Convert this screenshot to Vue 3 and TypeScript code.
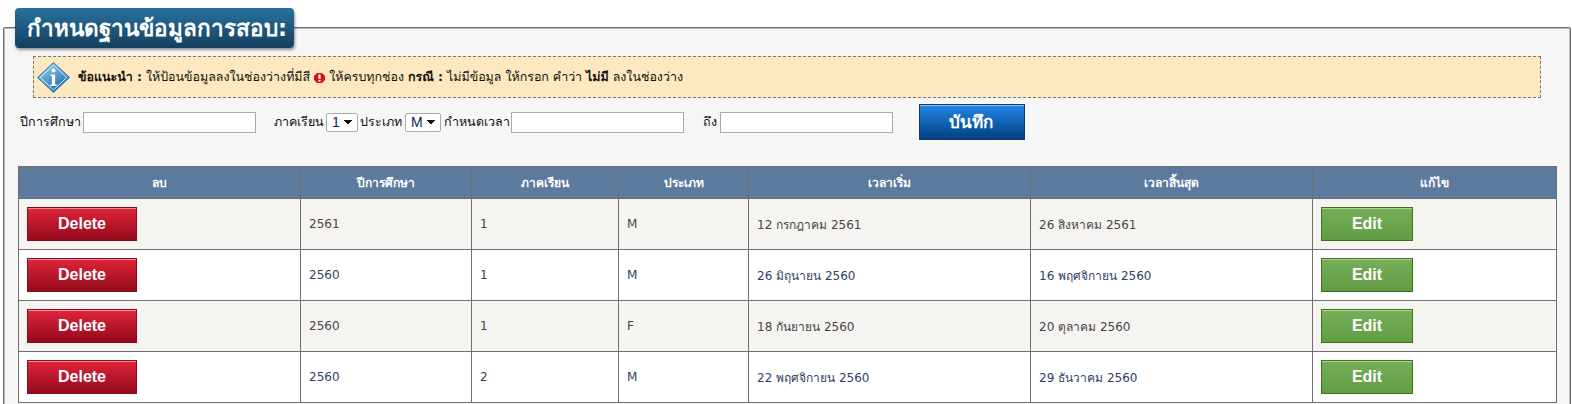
<script setup lang="ts">
interface Row { year: string; term: string; type: string; start: string; end: string }
const rows: Row[] = [
  { year: '2561', term: '1', type: 'M', start: '12 กรกฎาคม 2561', end: '26 สิงหาคม 2561' },
  { year: '2560', term: '1', type: 'M', start: '26 มิถุนายน 2560', end: '16 พฤศจิกายน 2560' },
  { year: '2560', term: '1', type: 'F', start: '18 กันยายน 2560', end: '20 ตุลาคม 2560' },
  { year: '2560', term: '2', type: 'M', start: '22 พฤศจิกายน 2560', end: '29 ธันวาคม 2560' },
]
</script>

<template>
  <div class="page">
    <fieldset class="box">
      <legend class="title">กำหนดฐานข้อมูลการสอบ:</legend>
      <div class="notice">
        <svg class="info" width="33" height="31" viewBox="0 0 33 31">
          <defs>
            <linearGradient id="dia" x1="0" y1="0" x2="0.6" y2="1">
              <stop offset="0" stop-color="#a9d6f3" />
              <stop offset="1" stop-color="#1a6cae" />
            </linearGradient>
          </defs>
          <path d="M16.5 .5 32.5 15.5 16.5 30.5.5 15.5z" fill="url(#dia)" stroke="#2a77b4" />
          <path d="M16.5 3 29.8 15.5 16.5 28 3.2 15.5z" fill="none" stroke="#d9effc" />
          <circle cx="16.5" cy="8.5" r="2" fill="#fff" />
          <path d="M13.5 12.5h4.6v10h1.6V24h-6.4v-1.500h1.600v-8.500h-1.400z" fill="#fff" />
        </svg>
        <span><b>ข้อแนะนำ :</b> ให้ป้อนข้อมูลลงในช่องว่างที่มีสี</span>
        <svg class="excl" width="11" height="10" viewBox="0 0 11 10">
          <path d="M3 0h5l3 3v4l-3 3H3L0 7V3z" fill="#d3121a" />
          <rect x="4.400" y="1.500" width="2.200" height="4.300" fill="#fff" />
          <rect x="4.400" y="6.800" width="2.200" height="1.800" fill="#fff" />
        </svg>
        <span>ให้ครบทุกช่อง <b>กรณี :</b> ไม่มีข้อมูล ให้กรอก คำว่า <b>ไม่มี</b> ลงในช่องว่าง</span>
      </div>

      <form class="filters" @submit.prevent>
        <label for="f-year" class="first">ปีการศึกษา</label>
        <input id="f-year" class="text" type="text" />
        <label for="f-term" class="gap-a">ภาคเรียน</label>
        <select id="f-term" class="sel sel-a"><option>1</option></select>
        <label for="f-type" class="type">ประเภท</label>
        <select id="f-type" class="sel sel-b"><option>M</option></select>
        <label for="f-from" class="from">กำหนดเวลา</label>
        <input id="f-from" class="text" type="text" />
        <label for="f-to" class="gap-b">ถึง</label>
        <input id="f-to" class="text" type="text" />
        <button class="btn save" type="submit">บันทึก</button>
      </form>

      <table class="grid">
        <colgroup>
          <col style="width: 282px" /><col style="width: 171px" /><col style="width: 147px" />
          <col style="width: 130px" /><col style="width: 282px" /><col style="width: 282px" /><col />
        </colgroup>
        <thead>
          <tr>
            <th>ลบ</th><th>ปีการศึกษา</th><th>ภาคเรียน</th><th>ประเภท</th><th>เวลาเริ่ม</th><th>เวลาสิ้นสุด</th><th>แก้ไข</th>
          </tr>
        </thead>
        <tbody>
          <tr v-for="(r, i) in rows" :key="i">
            <td><button class="btn del" type="button">Delete</button></td>
            <td>{{ r.year }}</td>
            <td>{{ r.term }}</td>
            <td>{{ r.type }}</td>
            <td>{{ r.start }}</td>
            <td>{{ r.end }}</td>
            <td><button class="btn edit" type="button">Edit</button></td>
          </tr>
        </tbody>
      </table>
    </fieldset>
  </div>
</template>

<style>
html, body { margin: 0; overflow: hidden; background: #fff; }
</style>

<style scoped>
.page {
  height: 404px;
  overflow: hidden;
  padding: 8px 1px 0 3px;
  box-sizing: border-box;
  font-family: "DejaVu Sans", "Noto Sans", sans-serif;
  font-size: 12px;
}
.box {
  margin: 0;
  border: 1px solid #6f6f6f;
  box-shadow: inset 0 0 0 1px #b8b8b8;
  border-radius: 2px;
  background: #f6f6f6;
  padding: 0 13px 20px 14px;
  min-width: 0;
  height: 600px;
  box-sizing: border-box;
}
.title {
  margin-left: -3px;
  padding: 0 7px 0 12px;
  height: 39px;
  line-height: 40px;
  box-sizing: border-box;
  border-radius: 4px;
  background: linear-gradient(#27739f, #15405f);
  box-shadow: 0 1px 0 #15405f, 1px 3px 3px rgba(0, 0, 0, 0.4);
  color: #fff;
  font-size: 22.5px;
  font-weight: bold;
  white-space: nowrap;
}
.notice {
  display: flex;
  align-items: center;
  gap: 4px;
  margin: 9px 16px 0 15px;
  height: 42px;
  box-sizing: border-box;
  padding: 1px 0 0 3px;
  border: 1px dashed #777;
  background: #fee8bf;
  color: #111;
  font-size: 12.45px;
  text-rendering: geometricPrecision;
}
.info { margin: -1px 4px 0 0; flex: none; }
.excl { flex: none; }
.filters {
  display: flex;
  align-items: center;
  height: 36px;
  margin-top: 6px;
  margin-bottom: 26px;
  color: #111;
  font-size: 12.5px;
}
.filters label { margin-right: 3px; margin-left: 3px; white-space: nowrap; }
.filters .first { margin-left: 2px; margin-right: 2px; }
.filters .gap-a { margin-left: 18px; margin-right: 2px; }
.filters .type { margin-left: 2px; }
.filters .from { margin-right: 1px; }
.filters .gap-b { margin-left: 19px; }
.text {
  width: 173px;
  height: 21px;
  box-sizing: border-box;
  border: 1px solid #aaa;
  background: #fff;
  padding: 0 2px;
}
.sel {
  appearance: none;
  height: 19px;
  box-sizing: border-box;
  padding: 0 0 0 5px;
  border: 1px solid #aaa;
  border-radius: 2px;
  background-color: #fff;
  background-image:
    linear-gradient(45deg, transparent 50%, #111 50%),
    linear-gradient(-45deg, transparent 50%, #111 50%);
  background-size: 4px 5px, 4px 5px;
  background-repeat: no-repeat;
  background-position: right 9px top 6px, right 5px top 6px;
  font-family: "Liberation Sans", sans-serif;
  font-size: 14px;
  color: #0a1f5c;
}
.sel-a { width: 32px; }
.sel-b { width: 36px; }
.btn {
  display: block;
  box-sizing: border-box;
  padding: 0;
  font-family: "Liberation Sans", sans-serif;
  font-size: 16px;
  font-weight: bold;
  color: #fff;
  cursor: pointer;
}
.save {
  width: 106px;
  height: 36px;
  margin-left: 26px;
  padding: 0 3px 2px 0;
  border: 1px solid #0f3a6b;
  background: linear-gradient(#2387e6, #003f7f);
  box-shadow: inset 0 1px 0 #8fc3f0;
  font-family: "DejaVu Sans", sans-serif;
  font-size: 17px;
}
.grid {
  width: 1539px;
  table-layout: fixed;
  border-collapse: collapse;
}
.grid th, .grid td {
  border: 1px solid #6f6f6f;
  box-sizing: border-box;
}
.grid th {
  height: 32px;
  padding: 0;
  background: #5c7a9e;
  color: #fff;
  font-size: 12px;
  font-weight: bold;
  text-align: center;
}
.grid td {
  height: 51px;
  padding: 0 8px;
  background: #fff;
  color: #2f3f66;
  font-size: 12px;
}
.grid tbody tr:nth-child(odd) td { background: #f6f4f0; color: #45444a; }
.del {
  width: 110px;
  height: 34px;
  border: 1px solid #8c0a1e;
  background: linear-gradient(#e0243a, #930a1c);
  box-shadow: inset 0 1px 0 #ef8f9b;
}
.edit {
  width: 92px;
  height: 34px;
  border: 1px solid #3c7418;
  background: linear-gradient(#76ae5a, #629c44);
  box-shadow: inset 0 1px 0 #aed29a;
}
</style>
